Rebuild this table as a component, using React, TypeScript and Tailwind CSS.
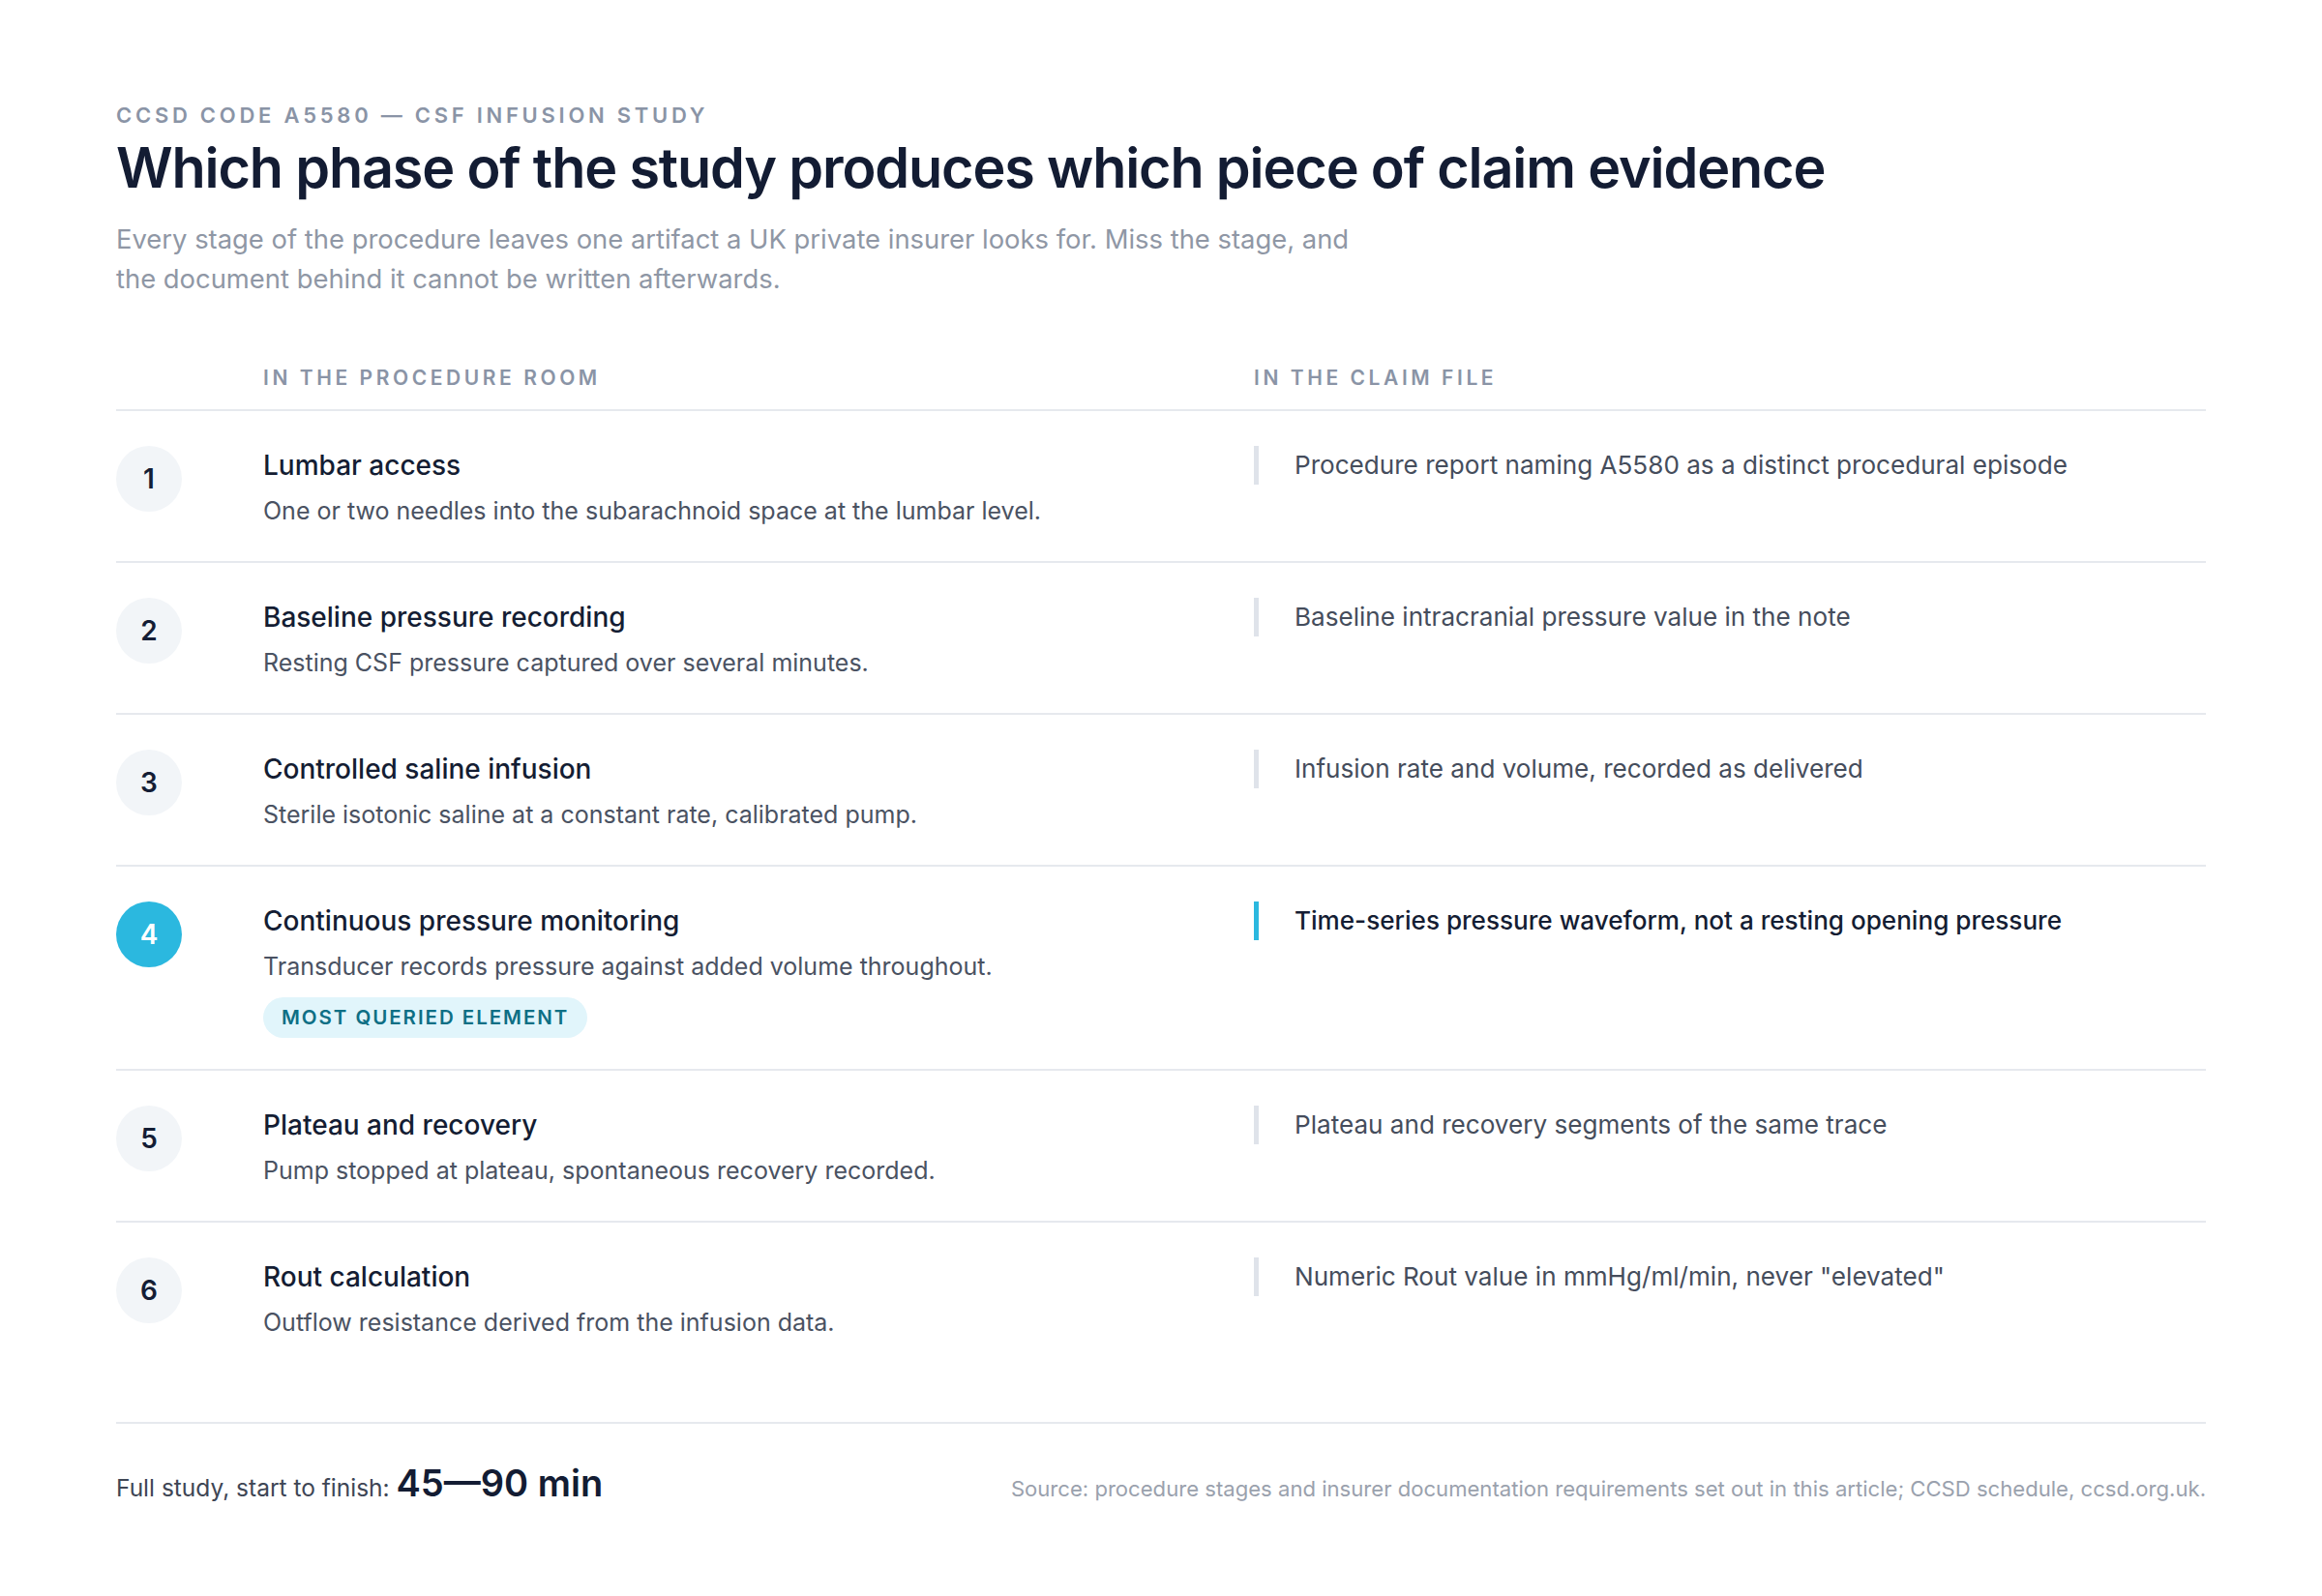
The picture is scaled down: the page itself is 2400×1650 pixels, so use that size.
import React from "react";

type Row = { n: number; title: string; desc: string; claim: string; hot?: boolean };

const rows: Row[] = [
  { n: 1, title: "Lumbar access", desc: "One or two needles into the subarachnoid space at the lumbar level.", claim: "Procedure report naming A5580 as a distinct procedural episode" },
  { n: 2, title: "Baseline pressure recording", desc: "Resting CSF pressure captured over several minutes.", claim: "Baseline intracranial pressure value in the note" },
  { n: 3, title: "Controlled saline infusion", desc: "Sterile isotonic saline at a constant rate, calibrated pump.", claim: "Infusion rate and volume, recorded as delivered" },
  { n: 4, title: "Continuous pressure monitoring", desc: "Transducer records pressure against added volume throughout.", claim: "Time-series pressure waveform, not a resting opening pressure", hot: true },
  { n: 5, title: "Plateau and recovery", desc: "Pump stopped at plateau, spontaneous recovery recorded.", claim: "Plateau and recovery segments of the same trace" },
  { n: 6, title: "Rout calculation", desc: "Outflow resistance derived from the infusion data.", claim: "Numeric Rout value in mmHg/ml/min, never \"elevated\"" },
];

export default function App() {
  return (
    <div className="min-h-screen bg-white" style={{ fontFamily: "Inter, 'Noto Sans', sans-serif" }}>
      <div className="ml-[120px] w-[2160px] pt-[107px]">
        <div className="text-[22px] leading-[24px] font-semibold tracking-[0.17em] text-[#8a94a6]">
          CCSD CODE A5580 — CSF INFUSION STUDY
        </div>
        <h1 className="mt-[7px] text-[57.5px] leading-[70px] font-semibold tracking-[-0.02em] text-[#131c33]">
          Which phase of the study produces which piece of claim evidence
        </h1>
        <p className="mt-[19px] w-[1290px] text-[27.4px] leading-[41px] text-[#8f97a5]">
          Every stage of the procedure leaves one artifact a UK private insurer looks for. Miss the stage, and the document behind it cannot be written afterwards.
        </p>

        <div className="mt-[70px] grid grid-cols-[152px_1024px_1fr] border-b-2 border-[#e6e9ee] pb-[20px]">
          <div />
          <div className="text-[21px] leading-[24px] font-semibold tracking-[0.17em] text-[#8a94a6]">IN THE PROCEDURE ROOM</div>
          <div className="text-[21px] leading-[24px] font-semibold tracking-[0.17em] text-[#8a94a6]">IN THE CLAIM FILE</div>
        </div>

        {rows.map((r, i) => (
          <div
            key={r.n}
            className={`grid grid-cols-[152px_1024px_1fr] pt-[35px] pb-[32px] ${i < rows.length - 1 ? "border-b-2 border-[#e6e9ee]" : ""}`}
          >
            <div>
              <div
                className={`mt-px flex h-[68px] w-[68px] items-center justify-center rounded-full text-[28px] font-semibold ${
                  r.hot ? "bg-[#2bb8df] text-white" : "bg-[#f2f5f8] text-[#141d35]"
                }`}
              >
                {r.n}
              </div>
            </div>
            <div>
              <div className="text-[28px] leading-[42px] font-medium text-[#141d33]">{r.title}</div>
              <div className="mt-[6px] text-[25px] leading-[40px] text-[#4a5262]">{r.desc}</div>
              {r.hot && (
                <div className="mt-[12px] inline-flex h-[42px] items-center rounded-full bg-[#e1f5fb] px-[19px] text-[20.5px] font-semibold tracking-[0.095em] text-[#0e6f85]">
                  MOST QUERIED ELEMENT
                </div>
              )}
            </div>
            <div>
              <div
                className={`mt-px border-l-[5px] pl-[37px] text-[26.1px] leading-[40px] ${
                  r.hot ? "border-[#2bb8df] font-medium text-[#141d33]" : "border-[#dfe3ea] text-[#454d5c]"
                }`}
              >
                {r.claim}
              </div>
            </div>
          </div>
        ))}

        <div className="mt-[51px] flex items-baseline justify-between border-t-2 border-[#e6e9ee] pt-[33px]">
          <div className="text-[24.5px] text-[#3e4655]">
            Full study, start to finish:{" "}
            <span className="text-[38px] font-semibold text-[#131c33]">45—90 min</span>
          </div>
          <div className="text-[22.1px] text-[#9aa1ad]">
            Source: procedure stages and insurer documentation requirements set out in this article; CCSD schedule, ccsd.org.uk.
          </div>
        </div>
      </div>
    </div>
  );
}
